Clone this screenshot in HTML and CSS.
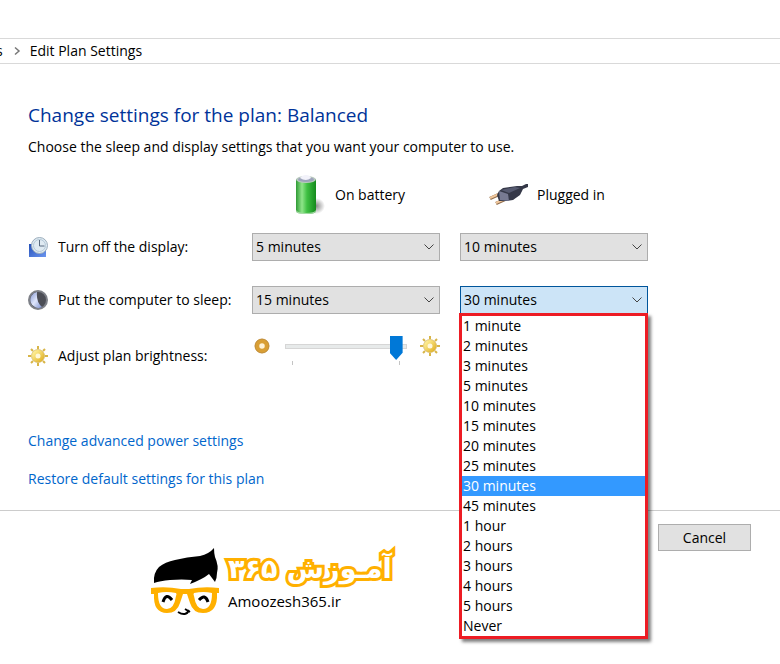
FILE: index.html
```
<!DOCTYPE html>
<html lang="en">
<head>
  <meta charset="UTF-8">
  <meta name="viewport" content="width=device-width, initial-scale=1.0">
  <title>Edit Plan Settings</title>
  <link rel="stylesheet" href="styles.css">
</head>
<body>
  <!-- Address bar -->
  <nav class="address-bar">
    <span>s</span>
    <svg class="crumb-arrow" viewBox="0 0 8 10"><path d="M2 1.500l4 3.500-4 3.500" fill="none" stroke="#777" stroke-width="1.500"/></svg>
    <span>Edit Plan Settings</span>
  </nav>

  <main class="content">
    <h1>Change settings for the plan: Balanced</h1>
    <p class="intro">Choose the sleep and display settings that you want your computer to use.</p>

    <div class="plan-grid">
      <!-- Column headings -->
      <div class="column-head battery-head">
        <svg class="battery-icon" viewBox="0 0 30 40">
          <defs>
            <linearGradient id="cell" x1="0" x2="1">
              <stop offset="0" stop-color="#2f9a35"/>
              <stop offset=".3" stop-color="#8fe58a"/>
              <stop offset=".55" stop-color="#3fc043"/>
              <stop offset="1" stop-color="#148a1c"/>
            </linearGradient>
            <radialGradient id="cellShadow">
              <stop offset="0" stop-color="#888"/>
              <stop offset="1" stop-color="#fff"/>
            </radialGradient>
          </defs>
          <ellipse cx="21" cy="31" rx="9" ry="8" fill="url(#cellShadow)"/>
          <path d="M1 4v32q0 3 10 3t10-3V4z" fill="url(#cell)"/>
          <path d="M1 35v1q0 3 10 3t10-3v-1q-1 3-10 3t-10-3z" fill="#a9dca9"/>
          <ellipse cx="11" cy="4.500" rx="10" ry="3.500" fill="#b9c9bf"/>
          <ellipse cx="11" cy="4.500" rx="8" ry="2.500" fill="#9da3bb"/>
          <path d="M5 3q2-3 6-3t5 3q-5 4-11 0z" fill="#f2f2fa"/>
        </svg>
        <span>On battery</span>
      </div>
      <div class="column-head plug-head">
        <svg class="plug-icon" viewBox="0 0 40 22">
          <path d="M1 14.500l11-5M7 19.500l11-5" stroke="#8d6a4a" stroke-width="3.500"/>
          <path d="M1 14l11-5M7 19l11-5" stroke="#f0c79c" stroke-width="2"/>
          <path d="M10 7l4-3 14-2 5 0 4-2 2 0v3l-5 2-3 6-7 5-6 1-8 0-2-6z" fill="#353848"/>
          <path d="M10 7l9 3 1 7-9-1z" fill="#777a92"/>
          <path d="M12 6l14-3 5 1-11 5z" fill="#565a70"/>
        </svg>
        <span>Plugged in</span>
      </div>

      <!-- Turn off the display -->
      <div class="row-label">
        <svg class="row-icon" viewBox="0 0 20 20">
          <defs>
            <linearGradient id="screen" x1="0" x2="1" y2="1">
              <stop offset="0" stop-color="#2450b8"/>
              <stop offset="1" stop-color="#6b95ef"/>
            </linearGradient>
          </defs>
          <path d="M1 7h17v13H1z" fill="url(#screen)"/>
          <circle cx="11.500" cy="8.500" r="8" fill="#dfeaf2" stroke="#9badbc"/>
          <circle cx="11.500" cy="8.500" r="6" fill="none" stroke="#b5c9d8"/>
          <path d="M11.500 3v6h5" fill="none" stroke="#596b80"/>
        </svg>
        <span>Turn off the display:</span>
      </div>
      <select aria-label="Turn off the display, on battery"><option>5 minutes</option></select>
      <select aria-label="Turn off the display, plugged in"><option>10 minutes</option></select>

      <!-- Put the computer to sleep -->
      <div class="row-label">
        <svg class="row-icon" viewBox="0 0 20 20">
          <defs>
            <linearGradient id="moon" x1="0" x2="1" y2="1">
              <stop offset="0" stop-color="#8496d2"/>
              <stop offset=".5" stop-color="#dfe6fb"/>
              <stop offset="1" stop-color="#7f92d0"/>
            </linearGradient>
          </defs>
          <circle cx="10" cy="10" r="9" fill="#4c4e56" stroke="#7e8188" stroke-width="2"/>
          <path d="M9 2a8 8 0 1 0 5 15Q8 12 9 2z" fill="url(#moon)"/>
        </svg>
        <span>Put the computer to sleep:</span>
      </div>
      <select aria-label="Put the computer to sleep, on battery"><option>15 minutes</option></select>
      <div class="open-select">
        <select class="active" aria-label="Put the computer to sleep, plugged in"><option>30 minutes</option></select>
        <ul class="options" role="listbox" aria-label="Sleep times">
          <li role="option">1 minute</li>
          <li role="option">2 minutes</li>
          <li role="option">3 minutes</li>
          <li role="option">5 minutes</li>
          <li role="option">10 minutes</li>
          <li role="option">15 minutes</li>
          <li role="option">20 minutes</li>
          <li role="option">25 minutes</li>
          <li role="option" class="selected" aria-selected="true">30 minutes</li>
          <li role="option">45 minutes</li>
          <li role="option">1 hour</li>
          <li role="option">2 hours</li>
          <li role="option">3 hours</li>
          <li role="option">4 hours</li>
          <li role="option">5 hours</li>
          <li role="option">Never</li>
        </ul>
      </div>

      <!-- Brightness -->
      <label class="row-label" for="brightness">
        <svg class="row-icon" viewBox="0 0 20 20">
          <defs>
            <linearGradient id="gold" x1="0" x2="1" y2="1">
              <stop offset="0" stop-color="#fff19a"/>
              <stop offset="1" stop-color="#e3b52c"/>
            </linearGradient>
            <g id="sun">
              <path d="M10 0v3M10 17v3M0 10h3M17 10h3M3 3l2 2M15 15l2 2M3 17l2-2M15 5l2-2" stroke="#d8b548" stroke-width="2"/>
              <circle cx="10" cy="10" r="4.500" fill="#fff8dc" stroke="url(#gold)" stroke-width="4"/>
              <circle cx="10" cy="10" r="6.500" fill="none" stroke="#c9a84c" stroke-width=".6"/>
            </g>
          </defs>
          <use href="#sun"/>
        </svg>
        <span>Adjust plan brightness:</span>
      </label>
      <div class="brightness">
        <svg class="dim-icon" viewBox="0 0 16 16">
          <circle cx="8" cy="8" r="5" fill="#fff3d8" stroke="#d99f35" stroke-width="4.500"/>
          <circle cx="8" cy="8" r="7" fill="none" stroke="#b98a40" stroke-width=".8"/>
        </svg>
        <div class="slider">
          <input type="range" id="brightness" min="0" max="100" value="96">
          <div class="ticks"></div>
        </div>
        <svg class="row-icon" viewBox="0 0 20 20"><use href="#sun"/></svg>
      </div>
    </div>

    <div class="links">
      <a href="#">Change advanced power settings</a>
      <a href="#">Restore default settings for this plan</a>
    </div>
  </main>

  <footer class="footer">
    <div class="logo">
      <svg class="logo-face" viewBox="0 0 70 70">
        <path d="M4 36Q3 26 9 20q6-5 16-7 12-3 25-4Q59 7 64 1q0 5 1 9 4 9 2 16 0 5-2 9l-6-8q-6 5-19 10l2-4Q32 32 20 33 10 34 4 36z" fill="#000"/>
        <path d="M1 41q15-2 30 1h8q15-3 30-1v5h-2q1 20-14 20-10 0-13-10l-3-9h-4l-3 9q-3 10-13 10Q3 66 4 47H1z" fill="#ffb000"/>
        <path d="M8 46q8-2 18 0 1 1 0 3-2 13-9 13-9 0-9-16zM44 46q10-2 18 0 0 16-9 16-7 0-9-13-1-2 0-3z" fill="#fff"/>
        <path d="M13 55q3-10 9-2M49 53q6-7 9 2" fill="none" stroke="#000" stroke-width="3"/>
        <path d="M28 65q8 5 11-2M35 62l5 3" fill="none" stroke="#000" stroke-width="2"/>
      </svg>
      <div class="logo-text">
        <span class="logo-name" lang="fa" dir="rtl">آمـوزش ۳۶۵</span>
        <span class="logo-url">Amoozesh365.ir</span>
      </div>
    </div>
    <button type="button">Cancel</button>
  </footer>
</body>
</html>
```
FILE: styles.css
```
/* Global Style */
* {
  box-sizing: border-box;
}

body {
  min-height: 100vh;
  margin: 0;
  padding-top: 38px;
  background: #fff;
  color: #000;
  font-family: "Open Sans", "Noto Sans", sans-serif;
  font-size: 14px;
  line-height: 20px;
}

svg {
  display: block;
  flex: none;
}

/* Address bar */
.address-bar {
  display: flex;
  align-items: center;
  height: 26px;
  border-top: 1px solid #d9d9d9;
  border-bottom: 1px solid #d9d9d9;
  margin-left: -4px;
}

.crumb-arrow {
  width: 8px;
  height: 10px;
  margin: 0 9px 0 10px;
}

/* Main content */
.content {
  padding: 38px 28px 0;
}

h1 {
  margin: 0;
  color: #003399;
  font-size: 19px;
  font-weight: 400;
  line-height: 26px;
}

.intro {
  margin: 9px 0 10px;
}

.plan-grid {
  display: grid;
  grid-template-columns: 204px 188px 188px;
  grid-template-rows: 56px 48px 58px 54px;
  column-gap: 20px;
  align-items: center;
}

.column-head,
.row-label {
  display: flex;
  align-items: center;
  gap: 10px;
}

.battery-head {
  grid-column: 2;
  padding-left: 43px;
}

.plug-head {
  gap: 8px;
  padding-left: 29px;
}

.battery-icon {
  width: 30px;
  height: 40px;
}

.plug-icon {
  width: 40px;
  height: 22px;
}

.row-icon {
  width: 20px;
  height: 20px;
}

/* Drop-downs */
select {
  display: block;
  width: 100%;
  height: 28px;
  padding: 0 3px;
  border: 1px solid #adadad;
  border-radius: 0;
  appearance: none;
  background: #e1e1e1 url("data:image/svg+xml,%3Csvg xmlns='http://www.w3.org/2000/svg' width='10' height='6'%3E%3Cpath d='M.5.5 5 5 9.5.5' fill='none' stroke='%23444'/%3E%3C/svg%3E") no-repeat right 5px center;
  color: #000;
  font: inherit;
}

select.active {
  border-color: #00559b;
  background-color: #cce4f7;
}

.open-select {
  position: relative;
}

.options {
  position: absolute;
  top: 27px;
  left: -1px;
  right: 0;
  margin: 0;
  padding: 0;
  border: 3px solid #ed1c24;
  background: #fff;
  box-shadow: 3px 3px 3px rgba(0, 0, 0, 0.5);
  list-style: none;
}

.options li {
  padding-left: 1px;
}

.options .selected {
  background: #3399ff;
  color: #fff;
}

/* Brightness slider */
.brightness {
  display: flex;
  align-items: flex-start;
  height: 40px;
}

.dim-icon {
  width: 16px;
  height: 16px;
  margin: 2px 15px 0 2px;
}

.slider {
  width: 122px;
  margin-right: 13px;
}

.slider input {
  display: block;
  width: 100%;
  height: 24px;
  margin: 0;
  appearance: none;
  background:
    linear-gradient(#e7eaea, #e7eaea) center 9px / calc(100% - 2px) 3px no-repeat,
    linear-gradient(#d6d6d6, #d6d6d6) center 8px / 100% 5px no-repeat;
}

.slider input::-webkit-slider-thumb {
  width: 13px;
  height: 24px;
  appearance: none;
  background: #0078d7;
  clip-path: polygon(0 0, 100% 0, 100% 70%, 50% 100%, 0 70%);
}

.ticks {
  height: 4px;
  margin: 1px 7px 0;
  border: solid #c4c4c4;
  border-width: 0 1px;
}

/* Links */
.links {
  display: flex;
  flex-direction: column;
  align-items: flex-start;
  gap: 18px;
  margin-top: 48px;
}

a {
  color: #0066cc;
  text-decoration: none;
}

/* Footer */
.footer {
  display: flex;
  justify-content: space-between;
  align-items: flex-start;
  margin-top: 21px;
  padding: 13px 29px 0 150px;
  border-top: 1px solid #ccc;
}

.footer button {
  width: 93px;
  height: 27px;
  padding: 0;
  border: 1px solid #adadad;
  background: #e1e1e1;
  color: #000;
  font: inherit;
}

.logo {
  display: flex;
  gap: 8px;
  margin-top: 23px;
}

.logo-face {
  width: 70px;
  height: 70px;
}

.logo-text {
  display: flex;
  flex-direction: column;
  align-items: flex-start;
}

.logo-name {
  color: #fff;
  font-family: "DejaVu Sans", sans-serif;
  font-size: 27px;
  font-weight: 700;
  line-height: 44px;
  white-space: nowrap;
  -webkit-text-stroke: 6px #ffb000;
  paint-order: stroke fill;
}

.logo-url {
  font-size: 15px;
}
```
